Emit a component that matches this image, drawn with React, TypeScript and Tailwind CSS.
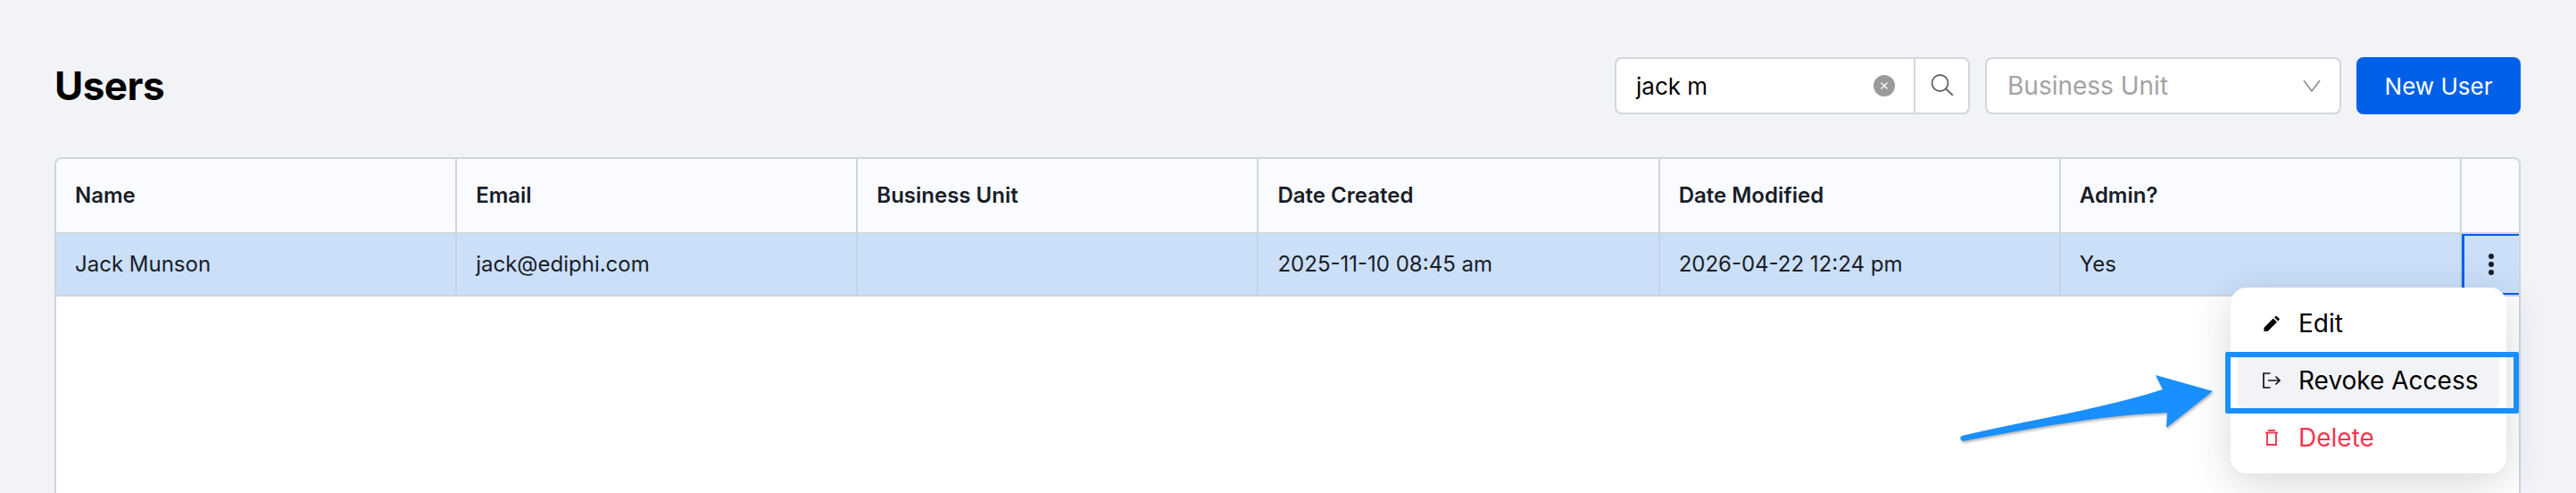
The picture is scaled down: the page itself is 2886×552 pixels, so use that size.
import * as React from "react";

const columns = ["Name", "Email", "Business Unit", "Date Created", "Date Modified", "Admin?"];
const row = ["Jack Munson", "jack@ediphi.com", "", "2025-11-10 08:45 am", "2026-04-22 12:24 pm", "Yes"];

const gridCols = "grid grid-cols-[repeat(6,449.17px)_1fr]";

function SearchBox() {
  return (
    <div className="flex h-16 w-[398px] items-stretch rounded-lg border-2 border-[#d2d6de] bg-white">
      <div className="flex flex-1 items-center justify-between pl-[22px] pr-[21px]">
        <span className="text-[26px] text-black">jack m</span>
        <span className="flex h-6 w-6 items-center justify-center rounded-full bg-[#9a9a9a]">
          <svg width="10" height="10" viewBox="0 0 10 10" fill="none" stroke="#fff" strokeWidth="1.4">
            <path d="M1.5 1.5l7 7M8.5 1.5l-7 7" />
          </svg>
        </span>
      </div>
      <div className="flex w-[61px] items-center justify-center border-l-2 border-[#d2d6de] pb-[2px] pl-[1px]">
        <svg width="26" height="24" viewBox="0 0 26 24" fill="none" stroke="#666" strokeWidth="1.8" strokeLinecap="round">
          <circle cx="10.5" cy="10" r="9" />
          <path d="M17 16.5l7.5 7" />
        </svg>
      </div>
    </div>
  );
}

function UnitSelect() {
  return (
    <div className="flex h-16 w-[399px] items-center justify-between rounded-lg border-2 border-[#d2d6de] bg-white pl-[23px] pr-[21px]">
      <span className="text-[28px] text-[#a3a3a3]">Business Unit</span>
      <svg width="20" height="14" viewBox="0 0 20 14" fill="none" stroke="#8c8c8c" strokeWidth="1.6">
        <path d="M1 1l9 12L19 1" />
      </svg>
    </div>
  );
}

function PencilIcon() {
  return (
    <svg width="18" height="19" viewBox="0 0 20 20" fill="#000">
      <path d="M0.5 19.5v-4.6L12 3.4l4.6 4.6L5.1 19.5z" />
      <path d="M13.4 2l1.5-1.5a1 1 0 0 1 1.4 0l3.2 3.2a1 1 0 0 1 0 1.4L18 6.6z" />
    </svg>
  );
}

function RevokeIcon() {
  return (
    <svg width="20" height="18" viewBox="0 0 20 18" fill="none" stroke="#111" strokeWidth="1.7">
      <path d="M8.5 1H1v16h7.5" />
      <path d="M6 9h13M14.5 4.5L19 9l-4.5 4.5" />
    </svg>
  );
}

function TrashIcon() {
  return (
    <svg width="14" height="18" viewBox="0 0 14 18" fill="none" stroke="#f0384f" strokeWidth="1.9">
      <path d="M2 4v13h10V4" />
      <path d="M0 3.5h14" />
      <path d="M3 1h8" />
    </svg>
  );
}

function RowMenu() {
  return (
    <div className="absolute left-[2499px] top-[322px] w-[309px] rounded-[18px] bg-white p-2 text-[28px] shadow-[0_10px_44px_rgba(30,40,60,0.18)]">
      <div className="flex h-16 items-center">
        <span className="flex w-[69px] justify-center pl-[7px]">
          <PencilIcon />
        </span>
        <span className="-ml-[1px] text-black">Edit</span>
      </div>
      <div className="flex h-16 items-center rounded-lg bg-[#f1f3f7]">
        <span className="flex w-[69px] justify-center pl-[7px]">
          <RevokeIcon />
        </span>
        <span className="-ml-[1px] text-black">Revoke Access</span>
      </div>
      <div className="flex h-16 items-center">
        <span className="flex w-[69px] justify-center pl-[7px]">
          <TrashIcon />
        </span>
        <span className="-ml-[1px] text-[#f0384f]">Delete</span>
      </div>
    </div>
  );
}

export default function App() {
  return (
    <div className="relative h-[552px] w-[2886px] overflow-hidden bg-[#f1f3f7] pl-[61px] pr-[62px] pt-16 font-['Inter',sans-serif]">
      <div className="flex h-16 items-center justify-between">
        <h1 className="text-[44px] font-bold tracking-[-0.5px] text-black">Users</h1>
        <div className="flex items-center gap-[17px]">
          <SearchBox />
          <UnitSelect />
          <button className="h-16 w-[184px] rounded-lg bg-[#0061e8] text-[26px] font-normal text-white">New User</button>
        </div>
      </div>

      <div className="mt-[48px] h-[400px] rounded-t-lg border-2 border-[#d0d5dd] bg-white">
        <div className={`${gridCols} h-[84px] rounded-t-lg border-b-2 border-[#d0d5dd] bg-[#fafbff] text-[24px] font-semibold text-[#181d27]`}>
          {columns.map((c) => (
            <div key={c} className="flex items-center border-r-2 border-[#d0d5dd] pl-[21px]">
              {c}
            </div>
          ))}
          <div />
        </div>
        <div className={`${gridCols} h-[70px] border-b-2 border-[#d0d5dd] bg-[#cbdff9] text-[24px] text-[#181d27]`}>
          {row.map((c, i) => (
            <div key={i} className="flex items-center border-r-2 border-[#c3d3e8] pl-[21px]">
              {c}
            </div>
          ))}
          <div className="flex items-center justify-center border-y-2 border-l-[3px] border-[#0061e8]">
            <svg width="6" height="24" viewBox="0 0 6 24" fill="#181d27">
              <circle cx="3" cy="3" r="3" />
              <circle cx="3" cy="12" r="3" />
              <circle cx="3" cy="21" r="3" />
            </svg>
          </div>
        </div>
      </div>

      <RowMenu />

      {/* callout */}
      <div className="absolute left-[2493px] top-[394px] h-[69px] w-[329px] rounded-[2px] border-[6px] border-[#1a8fff]" />
      <svg className="absolute left-[2190px] top-[415px]" width="300" height="90" viewBox="2190 415 300 90" style={{ filter: "drop-shadow(1px 2px 1.5px rgba(0,0,0,0.3))" }}>
        <path
          d="M2198 488 C2275 470 2355 458 2423 436 L2415 420 L2479 438 L2427 479 L2428 462 C2350 465 2275 480 2199 494 Q2194 491 2198 488 Z"
          fill="#1a8fff"
        />
      </svg>
    </div>
  );
}
